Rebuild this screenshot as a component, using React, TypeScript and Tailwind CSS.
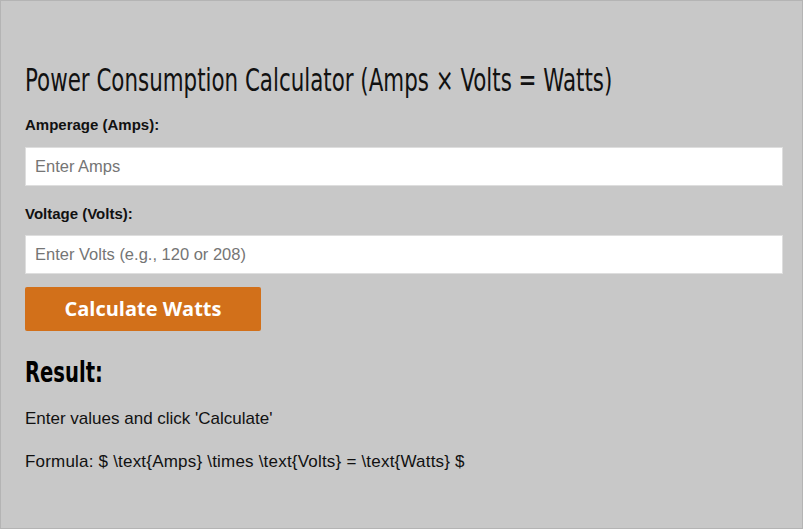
export default function App() {
  return (
    <div className="h-[529px] w-[803px] overflow-hidden border border-[#b4b4b4] bg-[#c8c8c8] px-6 font-['Liberation_Sans',Arial,sans-serif] text-[#111]">
      <h1 className="mt-[57px] origin-left scale-x-[0.755] whitespace-nowrap font-['DejaVu_Sans_Condensed',sans-serif] text-[31.5px] font-light leading-[44px] text-[#111]">
        Power Consumption Calculator (Amps × Volts = Watts)
      </h1>
      <label className="mt-[13px] block text-[15px] font-semibold leading-[20px] text-[#111]">
        Amperage (Amps):
      </label>
      <input
        placeholder="Enter Amps"
        className="mt-[12px] block h-[39px] w-[758px] border border-[#dedede] bg-white px-[9px] text-[16.5px] outline-none placeholder:text-[#757575]"
      />
      <label className="mt-[18px] block text-[15px] font-semibold leading-[20px] text-[#111]">
        Voltage (Volts):
      </label>
      <input
        placeholder="Enter Volts (e.g., 120 or 208)"
        className="mt-[11px] block h-[39px] w-[758px] border border-[#dedede] bg-white px-[9px] text-[16.5px] outline-none placeholder:text-[#757575]"
      />
      <button className="mt-[13px] flex h-[44px] w-[236px] items-center justify-center rounded-[2px] bg-[#d2701a] font-['Open_Sans',sans-serif] text-[20px] font-bold text-white">
        Calculate Watts
      </button>
      <h2 className="mt-[24px] origin-left scale-x-[0.75] font-['DejaVu_Sans_Condensed',sans-serif] text-[29px] font-bold leading-[34px] text-black">
        Result:
      </h2>
      <p className="mt-[19px] text-[17px] leading-[22px]">Enter values and click 'Calculate'</p>
      <p className="mt-[21px] text-[17px] leading-[22px] tracking-[0.2px]">
        Formula: $ \text{"{Amps}"} \times \text{"{Volts}"} = \text{"{Watts}"} $
      </p>
    </div>
  );
}
